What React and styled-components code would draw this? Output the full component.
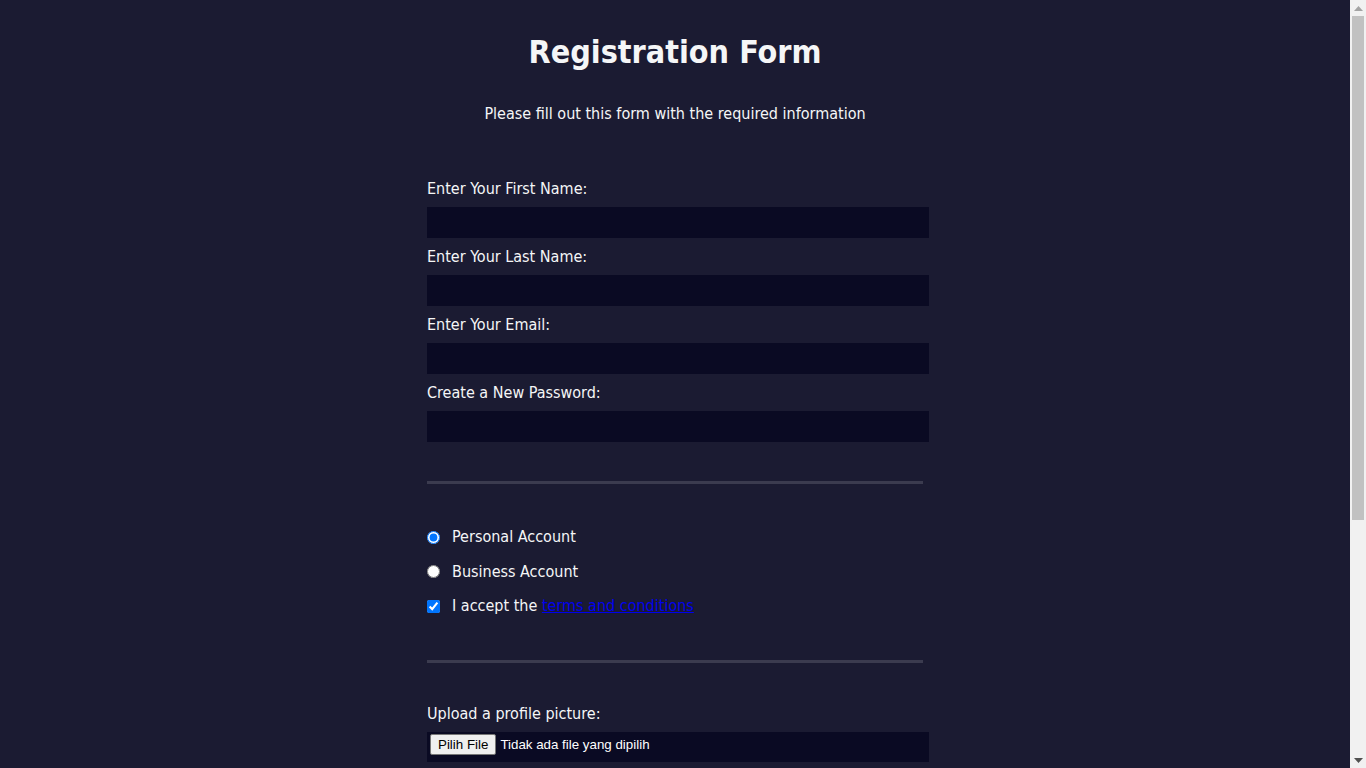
import React from "react";
import styled, { createGlobalStyle } from "styled-components";

const GlobalStyle = createGlobalStyle`
  html, body {
    margin: 0;
    padding: 0;
    overflow: hidden;
  }
  body {
    width: 100%;
    background-color: #1b1b32;
    color: #f5f6f7;
    font-family: "DejaVu Sans Condensed", "DejaVu Sans", sans-serif;
    font-size: 16px;
  }
`;

const Viewport = styled.div`
  display: flex;
  height: 100vh;
`;

const Page = styled.main`
  flex: 1;
  min-width: 0;
  overflow-y: auto;
  scrollbar-width: none;

  &::-webkit-scrollbar {
    display: none;
  }
`;

/* classic windows scrollbar, drawn as a strip on the right */
const ScrollBar = styled.div`
  display: flex;
  flex-direction: column;
  flex: none;
  width: 16px;
  background-color: #f1f1f1;
`;

const ScrollArrow = styled.div`
  display: flex;
  align-items: center;
  justify-content: center;
  height: 16px;
  flex: none;
`;

const ScrollTrack = styled.div`
  flex: 1;
  padding: 0 2px;
`;

const ScrollThumb = styled.div`
  height: ${(p) => p.$size}px;
  background-color: #c1c1c1;
`;

const Title = styled.h1`
  margin: 32px auto 30px;
  font-size: 32px;
  line-height: 41px;
  font-weight: bold;
  text-align: center;
`;

const Intro = styled.p`
  margin: 15px auto 14px;
  line-height: 21px;
  text-align: center;
`;

const Form = styled.form`
  width: 60vw;
  max-width: 500px;
  min-width: 300px;
  margin: 0 auto;
  padding-bottom: 32px;
`;

const Fieldset = styled.fieldset`
  margin: 0 2px;
  min-width: 0;
  border: none;
  padding: 32px 0 ${(p) => (p.$bottom ? p.$bottom : 32)}px;
  border-bottom: ${(p) => (p.$last ? "none" : "3px solid #3b3b4f")};
`;

const Label = styled.label`
  display: block;
  margin: 8px 0;
  line-height: 21px;
`;

const TextInput = styled.input`
  display: block;
  box-sizing: border-box;
  width: calc(100% + 6px);
  height: 31px;
  margin: 8px 0 0 0;
  padding: 1px 2px;
  background-color: #0a0a23;
  border: 1px solid #0a0a23;
  color: #ffffff;
  font-family: "Liberation Sans", Arial, sans-serif;
  font-size: 13.33px;
  outline: none;
`;

const Select = styled.select`
  display: block;
  box-sizing: border-box;
  width: calc(100% + 6px);
  height: 31px;
  margin: 8px 0 0 0;
  background-color: #0a0a23;
  border: 1px solid #0a0a23;
  color: #ffffff;
  font-family: "Liberation Sans", Arial, sans-serif;
  font-size: 13.33px;
`;

const TextArea = styled.textarea`
  display: block;
  box-sizing: border-box;
  width: calc(100% + 6px);
  height: 56px;
  margin: 8px 0 0 0;
  padding: 2px;
  background-color: #0a0a23;
  border: 1px solid #0a0a23;
  color: #ffffff;
  font-family: "Liberation Mono", monospace;
  font-size: 13.33px;
  resize: vertical;
`;

const ChoiceLabel = styled.label`
  display: flex;
  align-items: center;
  height: 26.5px;
  margin: 8px 0;
  line-height: 19px;

  span {
    padding-bottom: 1px;
  }
`;

const Inline = styled.input`
  width: 13px;
  height: 13px;
  margin: 0 12px 0 0;
  flex: none;
`;

const Link = styled.a`
  color: #0000ee;
  text-decoration: underline;
`;

const FileBox = styled.label`
  display: flex;
  align-items: flex-start;
  box-sizing: border-box;
  width: calc(100% + 6px);
  height: 30px;
  margin: 8px 0 0 0;
  padding: 1px 2px;
  background-color: #0a0a23;
  border: 1px solid #0a0a23;
  color: #ffffff;
  font-family: "Liberation Sans", Arial, sans-serif;
  font-size: 13.33px;
  line-height: 21px;
  cursor: default;

  input {
    display: none;
  }
`;

const FileButton = styled.span`
  display: inline-flex;
  align-items: center;
  box-sizing: border-box;
  height: 21px;
  padding: 1px 7px;
  margin-right: 4px;
  background-color: #efefef;
  border: 1px solid #767676;
  border-radius: 2px;
  color: #000000;
`;

const Submit = styled.input`
  display: block;
  width: 60%;
  min-width: 300px;
  height: 32px;
  margin: 16px auto;
  font-size: 17.6px;
  font-family: "DejaVu Sans Condensed", "DejaVu Sans", sans-serif;
  background-color: #3b3b4f;
  border: 2px solid #ffffff;
  color: #f5f6f7;
`;

const Arrow = ({ down, color }) => (
  <svg width="9" height="5" viewBox="0 0 9 5">
    <polygon points={down ? "0,0 9,0 4.5,5" : "0,5 9,5 4.5,0"} fill={color} />
  </svg>
);

export default function App() {
  return (
    <Viewport>
      <GlobalStyle />
      <Page>
        <Title>Registration Form</Title>
        <Intro>Please fill out this form with the required information</Intro>
        <Form onSubmit={(e) => e.preventDefault()}>
          <Fieldset $bottom={31}>
            <Label>
              Enter Your First Name:
              <TextInput type="text" name="first-name" required />
            </Label>
            <Label>
              Enter Your Last Name:
              <TextInput type="text" name="last-name" required />
            </Label>
            <Label>
              Enter Your Email:
              <TextInput type="email" name="email" required />
            </Label>
            <Label>
              Create a New Password:
              <TextInput type="password" name="new-password" required />
            </Label>
          </Fieldset>
          <Fieldset>
            <ChoiceLabel>
              <Inline type="radio" name="account-type" defaultChecked />
              <span>Personal Account</span>
            </ChoiceLabel>
            <ChoiceLabel>
              <Inline type="radio" name="account-type" />
              <span>Business Account</span>
            </ChoiceLabel>
            <ChoiceLabel>
              <Inline type="checkbox" name="terms" defaultChecked required />
              <span>
                I accept the <Link href="#terms">terms and conditions</Link>
              </span>
            </ChoiceLabel>
          </Fieldset>
          <Fieldset $last>
            <Label>
              Upload a profile picture:
              <FileBox>
                <input type="file" name="file" />
                <FileButton>Pilih File</FileButton>
                Tidak ada file yang dipilih
              </FileBox>
            </Label>
            <Label>
              Input your age (years):
              <TextInput type="number" name="age" min="13" max="120" />
            </Label>
            <Label>
              How did you hear about us?
              <Select name="referrer" defaultValue="">
                <option value="">(select one)</option>
                <option value="1">freeCodeCamp News</option>
                <option value="2">freeCodeCamp YouTube Channel</option>
                <option value="3">freeCodeCamp Forum</option>
                <option value="4">Other</option>
              </Select>
            </Label>
            <Label>
              Provide a bio:
              <TextArea name="bio" rows="3" cols="30" placeholder="I like coding on the beach..." />
            </Label>
          </Fieldset>
          <Submit type="submit" value="Submit" />
        </Form>
      </Page>
      <ScrollBar>
        <ScrollArrow>
          <Arrow color="#a3a3a3" />
        </ScrollArrow>
        <ScrollTrack>
          <ScrollThumb $size={504} />
        </ScrollTrack>
        <ScrollArrow>
          <Arrow down color="#505050" />
        </ScrollArrow>
      </ScrollBar>
    </Viewport>
  );
}
